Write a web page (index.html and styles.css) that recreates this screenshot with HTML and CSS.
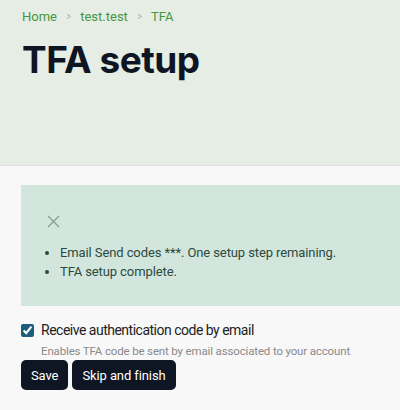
FILE: index.html
```html
<!DOCTYPE html>
<html lang="en">
<head>
    <meta charset="UTF-8">
    <meta name="viewport" content="width=device-width, initial-scale=1.0">
    <title>TFA setup</title>
    <link rel="stylesheet" href="styles.css">
</head>
<body>
    <header class="page-header">
        <nav class="breadcrumb">
            <a href="#">Home</a>
            <span class="sep">&gt;</span>
            <a href="#">test.test</a>
            <span class="sep">&gt;</span>
            <a href="#">TFA</a>
        </nav>
        <h1>TFA setup</h1>
    </header>

    <main class="content">
        <div class="messages">
            <button class="close" aria-label="Close">
                <svg width="13" height="13" viewBox="0 0 13 13">
                    <path d="M1 1 L12 12 M12 1 L1 12" stroke="currentColor" stroke-width="1.4" fill="none"/>
                </svg>
            </button>
            <ul>
                <li>Email Send codes ***. One setup step remaining.</li>
                <li>TFA setup complete.</li>
            </ul>
        </div>

        <form class="tfa-form">
            <label class="check">
                <input type="checkbox" checked>
                <span>Receive authentication code by email</span>
            </label>
            <div class="description">Enables TFA code be sent by email associated to your account</div>
            <div class="actions">
                <button type="button" class="btn">Save</button>
                <button type="button" class="btn">Skip and finish</button>
            </div>
        </form>
    </main>
</body>
</html>
```

FILE: styles.css
```css
body {
    margin: 0;
    font-family: Roboto, "Liberation Sans", sans-serif;
    background-color: #f8f8f8;
    color: #222;
}

.page-header {
    background-color: #e5ede5;
    border-bottom: 1px solid #dde3dd;
    height: 166px;
    padding: 0 22px;
    box-sizing: border-box;
}

.breadcrumb {
    padding-top: 8px;
    font-size: 13px;
    line-height: 18px;
    display: flex;
    gap: 9px;
}

.breadcrumb a {
    color: #46963e;
    text-decoration: none;
}

.breadcrumb .sep {
    color: #a3aea3;
    font-size: 10px;
    transform: scaleX(0.8);
}

h1 {
    font-family: "Inter", "Liberation Sans", sans-serif;
    font-size: 37px;
    font-weight: 700;
    letter-spacing: -0.5px;
    color: #0f1623;
    margin: 9px 0 0;
    line-height: 50px;
}

.content {
    padding: 19px 0 0 21px;
}

.messages {
    background-color: #d2e6dd;
    padding: 30px 26px 18px;
    height: 121px;
    box-sizing: border-box;
}

.close {
    background: none;
    border: none;
    padding: 0;
    color: #8a9e94;
    display: block;
    height: 13px;
    cursor: pointer;
}

.close svg {
    display: block;
}

.messages ul {
    margin: 15px 0 0;
    padding-left: 13px;
    font-size: 13px;
    line-height: 19px;
    letter-spacing: -0.1px;
    color: #2c4a3c;
}

.tfa-form {
    margin-top: 14px;
}

.check {
    display: flex;
    align-items: center;
    gap: 7px;
    font-size: 14px;
    line-height: 20px;
    letter-spacing: -0.5px;
    color: #222;
}

.check input {
    margin: 0;
    width: 13px;
    height: 13px;
    accent-color: #1c5d7c;
}

.description {
    margin: 2px 0 0 20px;
    font-size: 11.5px;
    line-height: 18px;
    letter-spacing: -0.15px;
    color: #8a8a8a;
}

.actions {
    display: flex;
    gap: 4px;
    margin-top: 0;
}

.btn {
    background-color: #0f1623;
    color: #fff;
    border: none;
    border-radius: 5px;
    height: 30px;
    padding: 0 10px;
    font-family: inherit;
    font-size: 13px;
    letter-spacing: -0.1px;
    cursor: pointer;
}
```
